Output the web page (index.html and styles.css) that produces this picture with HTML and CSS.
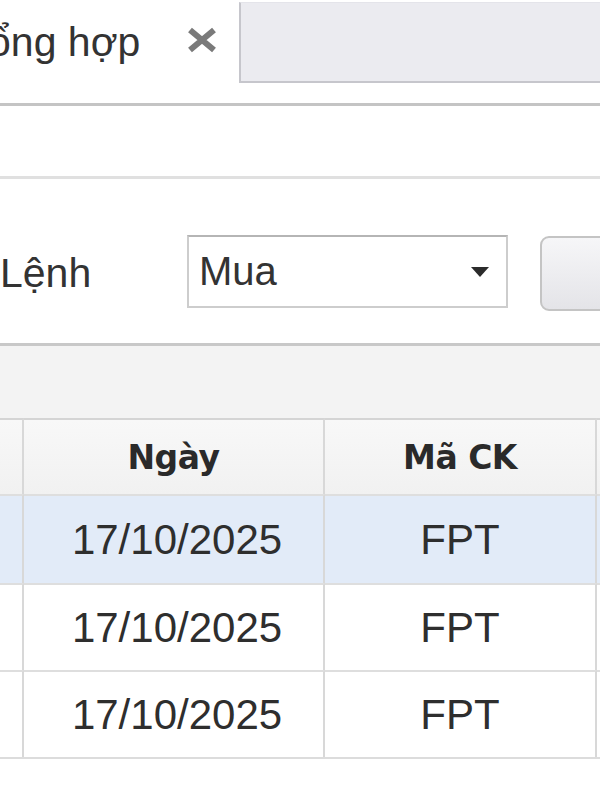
FILE: index.html
```html
<!DOCTYPE html>
<html lang="vi">
<head>
<meta charset="utf-8">
<link rel="stylesheet" href="styles.css">
</head>
<body>
<div class="page">
  <div class="tabbar">
    <div class="tab active">
      <span class="tab-title">Tổng hợp</span>
      <svg class="tab-close" width="32" height="26" viewBox="0 0 32 26"><path d="M4 3 L28 23 M28 3 L4 23" stroke="#7a7a7a" stroke-width="6" stroke-linecap="butt"/></svg>
    </div>
    <div class="tab inactive"></div>
  </div>
  <div class="rule rule-dark"></div>
  <div class="band"></div>
  <div class="rule rule-light"></div>
  <div class="filter">
    <span class="label">Lệnh</span>
    <div class="select">
      <span class="select-value">Mua</span>
      <svg class="select-arrow" width="18" height="10" viewBox="0 0 18 10"><path d="M0 0 H18 L9 10 Z" fill="#2b2b2b"/></svg>
    </div>
    <div class="btn"></div>
  </div>
  <div class="rule rule-mid"></div>
  <div class="toolbar"></div>
  <div class="grid">
    <div class="cell head first"></div>
    <div class="cell head">Ngày</div>
    <div class="cell head">Mã CK</div>
    <div class="cell head last"></div>

    <div class="cell sel first"></div>
    <div class="cell sel date">17/10/2025</div>
    <div class="cell sel">FPT</div>
    <div class="cell sel last"></div>

    <div class="cell first"></div>
    <div class="cell date">17/10/2025</div>
    <div class="cell">FPT</div>
    <div class="cell last"></div>

    <div class="cell first"></div>
    <div class="cell date">17/10/2025</div>
    <div class="cell">FPT</div>
    <div class="cell last"></div>
  </div>
</div>
</body>
</html>
```

FILE: styles.css
```css
html, body {
  margin: 0;
  padding: 0;
  background: #ffffff;
}
.page {
  width: 600px;
  height: 800px;
  overflow: hidden;
  font-family: "Liberation Sans", Arial, sans-serif;
  color: #2e2e2e;
}
.tabbar {
  display: flex;
  height: 103px;
  align-items: flex-start;
}
.tab.active {
  width: 239px;
  height: 82px;
  flex-shrink: 0;
  display: flex;
  align-items: center;
  background: #ffffff;
}
.tab-title {
  font-size: 41px;
  margin-left: -37px;
  margin-top: 2px;
  color: #333;
  white-space: nowrap;
}
.tab-close {
  margin-left: 46px;
  margin-top: -2px;
  flex-shrink: 0;
}
.tab.inactive {
  flex: 1;
  margin-top: 2px;
  height: 78px;
  background: #ebebf0;
  border-left: 2px solid #c6c6cc;
  border-bottom: 2px solid #c6c6cc;
  border-top: 1px solid #e4e4ea;
}
.rule { width: 100%; }
.rule-dark { height: 3px; background: #c4c4c4; }
.rule-light { height: 3px; background: #e0e0e0; }
.rule-mid { height: 3px; background: #c8c8c8; }
.band { height: 70px; }
.filter {
  height: 164px;
  display: flex;
  align-items: center;
  padding-top: 20px;
  box-sizing: border-box;
}
.label {
  font-size: 41px;
  width: 187px;
  flex-shrink: 0;
  margin-top: 4px;
  color: #333;
}
.select {
  box-sizing: border-box;
  flex-shrink: 0;
  width: 321px;
  height: 73px;
  border: 2px solid #cdcdcd;
  border-top-color: #b5b5b5;
  display: flex;
  align-items: center;
  justify-content: space-between;
  padding: 0 17px 0 10px;
  background: #fff;
}
.select-value {
  font-size: 40px;
  color: #333;
}
.select-arrow { margin-top: 2px; }
.btn {
  box-sizing: border-box;
  margin-left: 32px;
  margin-top: 4px;
  width: 80px;
  height: 75px;
  flex-shrink: 0;
  border: 2px solid #c4c4c4;
  border-radius: 9px;
  background: linear-gradient(#f6f6f8, #e4e4e8);
}
.toolbar {
  height: 72px;
  background: #f3f3f3;
}
.grid {
  display: grid;
  grid-template-columns: 24px 301px 272px 1fr;
  grid-template-rows: 76px 89px 87px 87px;
  border-bottom: 2px solid #dcdcdc;
}
.cell {
  box-sizing: border-box;
  display: flex;
  align-items: center;
  justify-content: center;
  font-size: 42px;
  border-right: 2px solid #d8d8d8;
  border-top: 2px solid #dedede;
  background: #ffffff;
}
.cell.date { padding-left: 7px; }
.cell.last { border-right: none; }
.cell.head {
  font-family: "DejaVu Sans", Verdana, sans-serif;
  font-weight: bold;
  font-size: 33px;
  color: #2a2a2a;
  background: linear-gradient(#f8f8f8, #f1f1f1);
  border-top: 2px solid #d4d4d4;
  letter-spacing: -0.5px;
}
.cell.sel {
  background: #e2ebf8;
}
```
